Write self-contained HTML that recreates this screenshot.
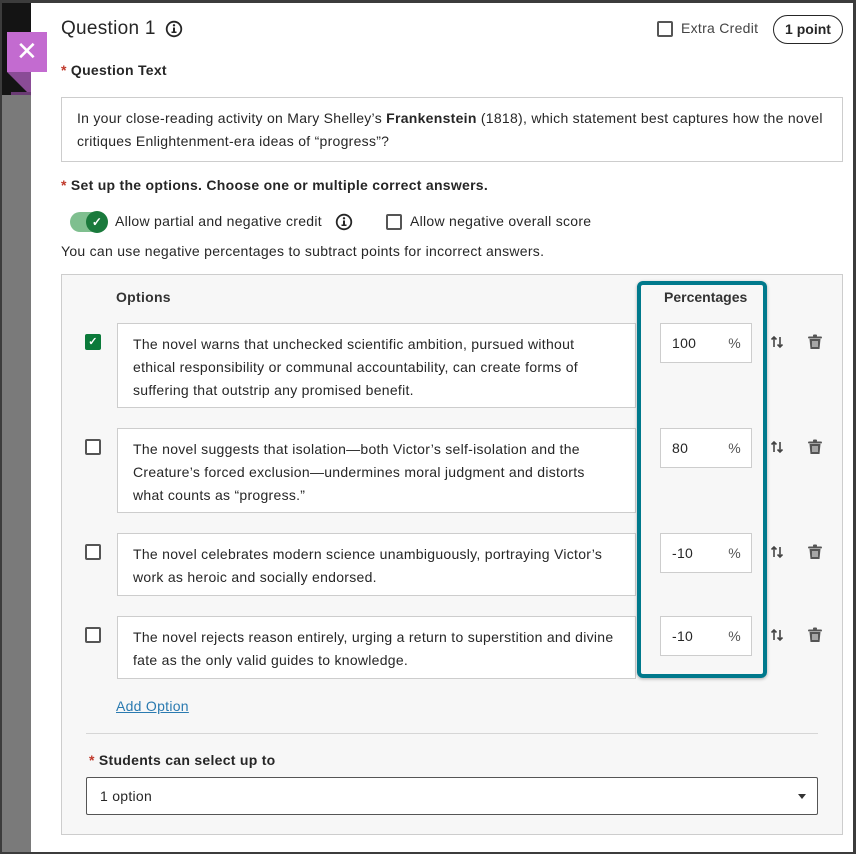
<!DOCTYPE html>
<html><head><meta charset="utf-8"><style>
*{box-sizing:border-box;margin:0;padding:0}
body{width:856px;height:854px;overflow:hidden;background:#3c3c3c;font-family:"Liberation Sans",sans-serif;color:#262626;position:relative;letter-spacing:0.28px}
.a{position:absolute}
.t{font-size:14px;line-height:23px;color:#262626}
.cb{position:absolute;width:16px;height:16px;border:2px solid #555;border-radius:2px;background:#fff}
.opt{position:absolute;left:117px;width:519px;background:#fff;border:1px solid #cdcdcd;padding:9px 22px 9px 15px;font-size:14px;line-height:23px;color:#262626}
.pct{position:absolute;left:660px;width:92px;height:40px;background:#fff;border:1px solid #cdcdcd;font-size:14px;padding:0 0 0 11px;line-height:38px}
.pct span{position:absolute;right:10px;top:0;color:#555}
.star{color:#c0392b}
b{font-weight:bold}
</style></head><body>
<div class="a" style="left:2px;top:3px;width:29px;height:92px;background:#141414"></div>
<div class="a" style="left:2px;top:95px;width:29px;height:757px;background:#7a7a7a"></div>
<div class="a" style="left:31px;top:3px;width:822px;height:849px;background:#fff"></div>
<div class="a" style="left:7px;top:32px;width:40px;height:40px;background:#c36bd0;color:#fff;font-size:26px;line-height:38px;text-align:center">✕</div>
<div class="a" style="left:7px;top:72px;width:0;height:0;border-top:24px solid #8a4c96;border-left:24px solid transparent"></div>
<div class="a" style="left:11px;top:92px;width:20px;height:3px;background:#6a3b74"></div>

<div class="a" style="left:61px;top:16px;font-size:19px;line-height:26px;color:#262626">Question 1</div>
<svg class="a" style="left:165px;top:20px" width="18" height="18" viewBox="0 0 18 18"><circle cx="9" cy="9" r="7.3" fill="none" stroke="#262626" stroke-width="1.8"/><rect x="8" y="7.5" width="2" height="5" fill="#262626"/><rect x="6.5" y="11.5" width="5" height="1.5" fill="#262626"/><circle cx="9" cy="5.3" r="1.2" fill="#262626"/></svg>
<div class="cb" style="left:657px;top:21px"></div>
<div class="a t" style="left:681px;top:17px;color:#444">Extra Credit</div>
<div class="a" style="left:773px;top:15px;width:70px;height:29px;border:1px solid #262626;border-radius:15px;font-size:14px;line-height:27px;text-align:center;font-weight:bold;color:#262626;letter-spacing:0">1 point</div>

<div class="a t" style="left:61px;top:59px;font-weight:bold"><span class="star">*</span> Question Text</div>
<div class="a" style="left:61px;top:97px;width:782px;height:65px;border:1px solid #cdcdcd;padding:9px 15px;font-size:14px;line-height:23px">In your close-reading activity on Mary Shelley’s <b>Frankenstein</b> (1818), which statement best captures how the novel critiques Enlightenment-era ideas of “progress”?</div>

<div class="a t" style="left:61px;top:174px;font-weight:bold"><span class="star">*</span> Set up the options. Choose one or multiple correct answers.</div>
<div class="a" style="left:70px;top:212px;width:36px;height:20px;border-radius:10px;background:#7fbf8f"></div>
<div class="a" style="left:86px;top:211px;width:22px;height:22px;border-radius:11px;background:#1a7a3c;color:#fff;font-size:12px;line-height:22px;text-align:center;font-weight:bold">✓</div>
<div class="a t" style="left:115px;top:210px">Allow partial and negative credit</div>
<svg class="a" style="left:335px;top:213px" width="18" height="18" viewBox="0 0 18 18"><circle cx="9" cy="9" r="7.3" fill="none" stroke="#262626" stroke-width="1.8"/><rect x="8" y="7.5" width="2" height="5" fill="#262626"/><rect x="6.5" y="11.5" width="5" height="1.5" fill="#262626"/><circle cx="9" cy="5.3" r="1.2" fill="#262626"/></svg>
<div class="cb" style="left:386px;top:214px"></div>
<div class="a t" style="left:410px;top:210px">Allow negative overall score</div>
<div class="a t" style="left:61px;top:240px">You can use negative percentages to subtract points for incorrect answers.</div>

<div class="a" style="left:61px;top:274px;width:782px;height:561px;background:#f7f7f7;border:1px solid #cdcdcd"></div>
<div class="a t" style="left:116px;top:286px;font-weight:bold;color:#333">Options</div>
<div class="a t" style="left:664px;top:286px;font-weight:bold;color:#333;letter-spacing:0">Percentages</div>

<div class="a" style="left:85px;top:334px;width:16px;height:16px;background:#0b7a3a;border-radius:2px;color:#fff;font-size:11px;line-height:16px;text-align:center;font-weight:bold">✓</div>
<div class="opt" style="top:323px;height:85px">The novel warns that unchecked scientific ambition, pursued without ethical responsibility or communal accountability, can create forms of suffering that outstrip any promised benefit.</div>
<div class="pct" style="top:323px">100<span>%</span></div>

<div class="cb" style="left:85px;top:439px"></div>
<div class="opt" style="top:428px;height:85px">The novel suggests that isolation—both Victor’s self-isolation and the Creature’s forced exclusion—undermines moral judgment and distorts what counts as “progress.”</div>
<div class="pct" style="top:428px">80<span>%</span></div>

<div class="cb" style="left:85px;top:544px"></div>
<div class="opt" style="top:533px;height:63px">The novel celebrates modern science unambiguously, portraying Victor’s work as heroic and socially endorsed.</div>
<div class="pct" style="top:533px">-10<span>%</span></div>

<div class="cb" style="left:85px;top:627px"></div>
<div class="opt" style="top:616px;height:63px;padding-right:6px">The novel rejects reason entirely, urging a return to superstition and divine fate as the only valid guides to knowledge.</div>
<div class="pct" style="top:616px">-10<span>%</span></div>

<svg width="0" height="0" style="position:absolute"><defs>
<g id="sw"><path d="M4 12V2M1.5 4.5L4 2l2.5 2.5" fill="none" stroke="#444" stroke-width="1.6"/><path d="M10 2v10M7.5 9.5L10 12l2.5-2.5" fill="none" stroke="#444" stroke-width="1.6"/></g>
<g id="tr"><rect x="1" y="2.5" width="14" height="2" rx="1" fill="#555"/><rect x="6" y="0.5" width="4" height="2.5" rx="1" fill="#555"/><path d="M2.5 5h11l-1 10h-9z" fill="#555"/><path d="M6 7v6M8 7v6M10 7v6" stroke="#f7f7f7" stroke-width="1"/></g>
</defs></svg>
<svg class="a" style="left:770px;top:335px" width="14" height="14"><use href="#sw"/></svg>
<svg class="a" style="left:807px;top:334px" width="16" height="16"><use href="#tr"/></svg>
<svg class="a" style="left:770px;top:440px" width="14" height="14"><use href="#sw"/></svg>
<svg class="a" style="left:807px;top:439px" width="16" height="16"><use href="#tr"/></svg>
<svg class="a" style="left:770px;top:545px" width="14" height="14"><use href="#sw"/></svg>
<svg class="a" style="left:807px;top:544px" width="16" height="16"><use href="#tr"/></svg>
<svg class="a" style="left:770px;top:628px" width="14" height="14"><use href="#sw"/></svg>
<svg class="a" style="left:807px;top:627px" width="16" height="16"><use href="#tr"/></svg>

<div class="a" style="left:637px;top:281px;width:130px;height:397px;border:4px solid #00798c;border-radius:6px;box-shadow:0 1px 3px rgba(0,0,0,.3)"></div>

<div class="a t" style="left:116px;top:695px;color:#2a7ab0;text-decoration:underline">Add Option</div>
<div class="a" style="left:86px;top:733px;width:732px;height:1px;background:#d6d6d6"></div>
<div class="a t" style="left:89px;top:749px;font-weight:bold"><span class="star">*</span> Students can select up to</div>
<div class="a" style="left:86px;top:777px;width:732px;height:38px;background:#fff;border:1px solid #555;border-radius:2px;font-size:14px;line-height:36px;padding-left:13px">1 option</div>
<div class="a" style="left:798px;top:794px;width:0;height:0;border-left:4px solid transparent;border-right:4px solid transparent;border-top:5px solid #333"></div>
</body></html>
